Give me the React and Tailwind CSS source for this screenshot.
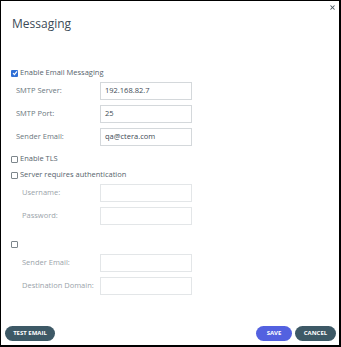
import { X } from "lucide-react";

function Field({ label, value, disabled, indent }) {
  return (
    <div className="flex items-center h-[18px]">
      <span className={`${indent ? "pl-[11px] w-[89px]" : "pl-[5px] w-[89px]"} text-[7.5px] ${disabled ? "text-[#9aa3aa]" : "text-[#6b7780]"}`}>
        {label}
      </span>
      <div className={`w-[92px] h-[18px] border flex items-center px-[4px] text-[7.5px] text-[#3c4a54] ${disabled ? "border-[#e3e6e8]" : "border-[#d4d8db]"}`}>
        {value}
      </div>
    </div>
  );
}

function Check({ checked, label }) {
  return (
    <div className="flex items-center gap-[2px] h-[10px]">
      {checked ? (
        <span className="w-[7px] h-[7px] rounded-[1px] bg-[#2f6fd6] flex items-center justify-center">
          <svg width="6" height="6" viewBox="0 0 6 6"><path d="M1 3.2 L2.4 4.6 L5 1.4" stroke="white" strokeWidth="1.2" fill="none" /></svg>
        </span>
      ) : (
        <span className="w-[7px] h-[7px] rounded-[1px] border border-[#7d868c] bg-white" />
      )}
      {label && <span className="text-[7.5px] text-[#56636c]">{label}</span>}
    </div>
  );
}

export default function App() {
  return (
    <div className="w-[341px] h-[347px] bg-white border-t border-l border-r-2 border-b-2 border-black flex flex-col relative" style={{ fontFamily: '"Open Sans", sans-serif' }}>
      <button className="absolute right-[3px] top-[3px] text-[#4a5660]">
        <X size={7} strokeWidth={3.5} />
      </button>
      <h1 className="pl-[11px] pt-[14px] text-[12px] text-[#3b4b57] leading-[18px]">Messaging</h1>

      <div className="pl-[10px] pt-[35px] flex flex-col">
        <Check checked label="Enable Email Messaging" />
        <div className="flex flex-col gap-[5px] mt-[4px]">
          <Field label="SMTP Server:" value="192.168.82.7" />
          <Field label="SMTP Port:" value="25" />
          <Field label="Sender Email:" value="qa@ctera.com" />
        </div>
        <div className="mt-[8px]"><Check label="Enable TLS" /></div>
        <div className="mt-[6px]"><Check label="Server requires authentication" /></div>
        <div className="flex flex-col gap-[5px] mt-[4px]">
          <Field label="Username:" disabled indent />
          <Field label="Password:" disabled indent />
        </div>
        <div className="mt-[14px]"><Check /></div>
        <div className="flex flex-col gap-[5px] mt-[5px]">
          <Field label="Sender Email:" disabled indent />
          <Field label="Destination Domain:" disabled indent />
        </div>
      </div>

      <div className="mt-auto flex items-center justify-between pl-[4px] pr-[3px] pb-[4px]">
        <button className="h-[15px] w-[50px] rounded-full bg-[#3d5966] text-white text-[6px] font-bold">TEST EMAIL</button>
        <div className="flex gap-[3px]">
          <button className="h-[15px] w-[36px] rounded-full bg-[#5361e0] text-white text-[6px] font-bold">SAVE</button>
          <button className="h-[15px] w-[41px] rounded-full bg-[#3d5966] text-white text-[6px] font-bold">CANCEL</button>
        </div>
      </div>
    </div>
  );
}
